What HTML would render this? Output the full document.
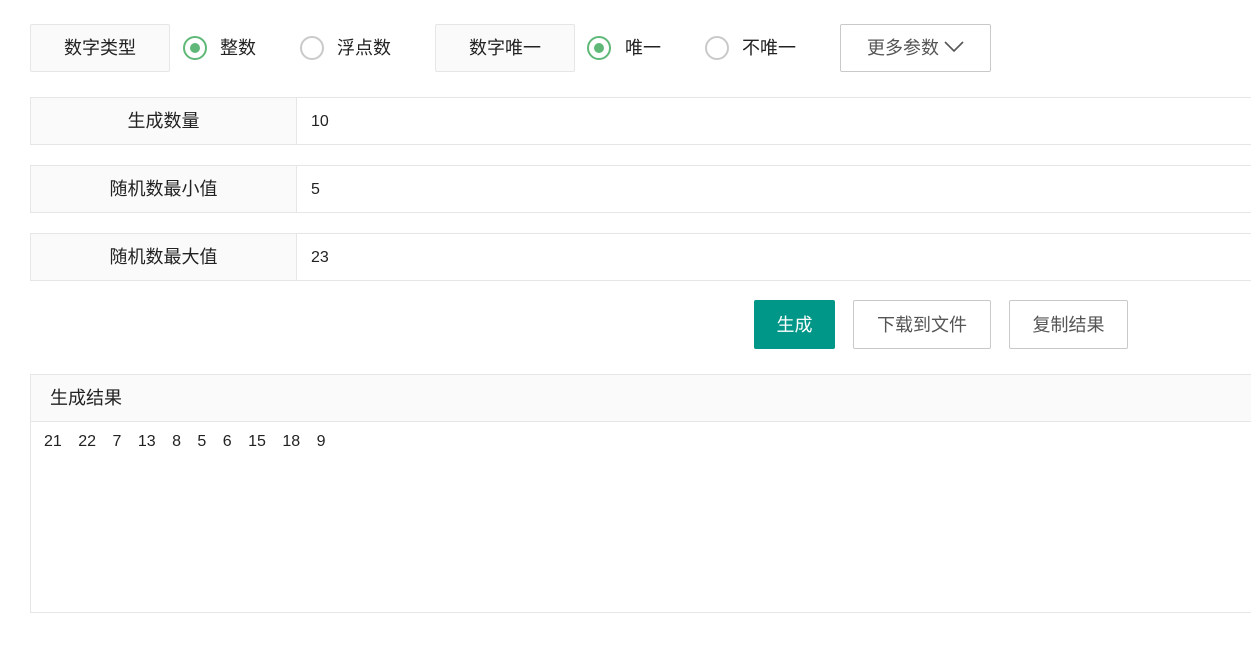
<!DOCTYPE html>
<html><head><meta charset="utf-8"><style>
*{box-sizing:border-box;margin:0;padding:0}
body{width:1251px;height:664px;background:#fff;font-family:"Liberation Sans","Noto Sans CJK SC",sans-serif;font-size:18px;color:#333;position:relative;overflow:hidden}
.a{position:absolute}
.lab{background:#fafafa;border:1px solid #e6e6e6;border-radius:2px;text-align:center;color:#222}
.radio{width:24px;height:24px;border-radius:50%;border:2px solid #c9c9c9}
.radio.on{border-color:#5fb878}
.radio.on::after{content:"";position:absolute;left:5px;top:5px;width:10px;height:10px;border-radius:50%;background:#5fb878}
.row{left:30px;width:1230px;height:48px;border:1px solid #e6e6e6}
.row .l{position:absolute;left:0;top:0;width:266px;height:46px;background:#fafafa;border-right:1px solid #e6e6e6;text-align:center;line-height:47px;color:#222}
.row .v{position:absolute;left:280px;top:0;line-height:47px;color:#222;font-size:16px}
.btn{height:49px;border:1px solid #c9c9c9;border-radius:2px;line-height:48px;text-align:center;color:#555}
</style></head><body>
<div class="a lab" style="left:30px;top:24px;width:140px;height:48px;line-height:47px">数字类型</div>
<div class="a radio on" style="left:183px;top:36px"></div>
<div class="a" style="left:220px;top:36px;line-height:25px;color:#222">整数</div>
<div class="a radio" style="left:300px;top:36px"></div>
<div class="a" style="left:337px;top:36px;line-height:25px;color:#222">浮点数</div>
<div class="a lab" style="left:435px;top:24px;width:140px;height:48px;line-height:47px">数字唯一</div>
<div class="a radio on" style="left:587px;top:36px"></div>
<div class="a" style="left:625px;top:36px;line-height:25px;color:#222">唯一</div>
<div class="a radio" style="left:705px;top:36px"></div>
<div class="a" style="left:742px;top:36px;line-height:25px;color:#222">不唯一</div>
<div class="a btn" style="left:840px;top:24px;width:151px;height:48px;line-height:47px">更多参数 <svg width="20" height="12" viewBox="0 0 20 12" style="vertical-align:1px"><path d="M1 1l9 9 9-9" fill="none" stroke="#555" stroke-width="1.6"/></svg></div>
<div class="a row" style="top:97px"><div class="l">生成数量</div><div class="v">10</div></div>
<div class="a row" style="top:165px"><div class="l">随机数最小值</div><div class="v">5</div></div>
<div class="a row" style="top:233px"><div class="l">随机数最大值</div><div class="v">23</div></div>
<div class="a btn" style="left:754px;top:300px;width:81px;background:#009688;border-color:#009688;color:#fff">生成</div>
<div class="a btn" style="left:853px;top:300px;width:138px">下载到文件</div>
<div class="a btn" style="left:1009px;top:300px;width:119px">复制结果</div>
<div class="a" style="left:30px;top:374px;width:1230px;height:239px;border:1px solid #e6e6e6">
<div style="height:47px;background:#fafafa;border-bottom:1px solid #e6e6e6;line-height:46px;padding-left:19px;color:#222">生成结果</div>
<div style="padding:11px 13px;color:#222;word-spacing:12px;font-size:16px">21 22 7 13 8 5 6 15 18 9</div>
</div>
</body></html>
